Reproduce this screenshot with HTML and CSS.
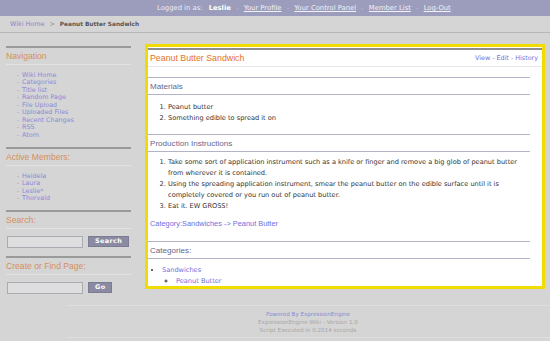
FILE: index.html
```html
<!doctype html>
<html lang="en">
<head>
	<meta charset="UTF-8">
	<title>Peanut Butter Sandwich</title>
	<link rel="stylesheet" href="styles.css">
</head>
<body>
	<div class="topbar">
		Logged in as: <b>Leslie</b> <span class="sep">-</span>
		<a href="#">Your Profile</a> <span class="sep">-</span>
		<a href="#">Your Control Panel</a> <span class="sep">-</span>
		<a href="#">Member List</a> <span class="sep">-</span>
		<a href="#">Log-Out</a>
	</div>
	<div class="crumbs"><a href="#">Wiki Home</a> <span class="gt">&gt;</span> <b>Peanut Butter Sandwich</b></div>

	<div class="wrap">
		<div class="side">
			<div class="box">
				<h3>Navigation</h3>
				<ul class="links">
					<li><a href="#">Wiki Home</a></li>
					<li><a href="#">Categories</a></li>
					<li><a href="#">Title list</a></li>
					<li><a href="#">Random Page</a></li>
					<li><a href="#">File Upload</a></li>
					<li><a href="#">Uploaded Files</a></li>
					<li><a href="#">Recent Changes</a></li>
					<li><a href="#">RSS</a></li>
					<li><a href="#">Atom</a></li>
				</ul>
			</div>
			<div class="box">
				<h3>Active Members:</h3>
				<ul class="links members">
					<li><a href="#">Heidela</a></li>
					<li><a href="#">Laura</a></li>
					<li><a href="#">Leslie*</a></li>
					<li><a href="#">Thorvald</a></li>
				</ul>
			</div>
			<div class="box">
				<h3>Search:</h3>
				<form class="field">
					<input type="text" class="input">
					<button type="button" class="btn">Search</button>
				</form>
			</div>
			<div class="box last">
				<h3>Create or Find Page:</h3>
				<form class="field">
					<input type="text" class="input">
					<button type="button" class="btn">Go</button>
				</form>
			</div>
		</div>

		<div class="main">
			<div class="title">
				<h1>Peanut Butter Sandwich</h1>
				<div class="tabs"><a href="#">View</a> - <a href="#">Edit</a> - <a href="#">History</a></div>
			</div>

			<h2>Materials</h2>
			<ol>
				<li>Peanut butter</li>
				<li>Something edible to spread it on</li>
			</ol>

			<h2>Production Instructions</h2>
			<ol class="steps">
				<li>Take some sort of application instrument such as a knife or finger and remove a big glob of peanut butter from wherever it is contained.</li>
				<li>Using the spreading application instrument, smear the peanut butter on the edible surface until it is completely covered or you run out of peanut butter.</li>
				<li>Eat it. EW GROSS!</li>
			</ol>
			<p class="catlink"><a href="#">Category:Sandwiches -&gt; Peanut Butter</a></p>

			<h2>Categories:</h2>
			<ul class="cats">
				<li><a href="#">Sandwiches</a>
					<ul>
						<li><a href="#">Peanut Butter</a></li>
					</ul>
				</li>
			</ul>
		</div>
	</div>

	<div class="footer">
		<a href="#">Powered By ExpressionEngine</a><br>
		ExpressionEngine Wiki - Version 1.0<br>
		Script Executed in 0.2014 seconds
	</div>
</body>
</html>
```

FILE: styles.css
```css
body{
	margin:0;
	background:#d5d5d5;
	font-family:"DejaVu Sans",Verdana,sans-serif;
	font-size:6.6px;
	color:#333;
}
a{
	color:#7b7bd6;
	text-decoration:none;
}
ul,ol,h1,h2,h3,p,form{
	margin:0;
	padding:0;
}

/* top bar */
.topbar{
	height:16px;
	line-height:16px;
	background:#9c9dbc;
	color:#eeeef4;
	padding-left:157px;
	white-space:nowrap;
	font-size:6.8px;
}
.topbar a{
	color:#f2f2f7;
	text-decoration:underline;
}
.topbar b{
	color:#fff;
	margin:0 0 0 4px;
}
.topbar .sep{
	color:#c4c5d8;
	margin:0 3px;
}

.crumbs{
	height:16px;
	line-height:17px;
	padding-left:10px;
	border-bottom:1px solid #b7b7b7;
	color:#666;
	font-size:6.4px;
}
.crumbs a{
	color:#8585c8;
}
.crumbs .gt{
	margin:0 3px;
	color:#888;
}
.crumbs b{
	color:#555;
	font-size:5.8px;
}

.wrap{
	display:flex;
	align-items:flex-start;
	margin-top:11px;
}

/* sidebar */
.side{
	width:125px;
	margin-left:6px;
	padding-top:2px;
	font-size:6.4px;
}
.box{
	border-top:2px solid #9a9a9a;
	padding-bottom:8px;
}
.box h3{
	height:16px;
	line-height:17px;
	border-bottom:1px solid #e2e2e2;
	font-family:"Liberation Sans",Arial,sans-serif;
	font-weight:normal;
	font-size:8.6px;
	color:#d68f5e;
}
.links{
	margin:7px 0 0 5px;
	list-style-type:"-";
	padding-left:8px;
	line-height:7.45px;
}
.links li::marker{
	color:#a5a5a5;
}
.links a{
	color:#8a8ad8;
	padding-left:3px;
}
.members{
	line-height:7.3px;
}
.field{
	display:flex;
	align-items:flex-start;
	gap:5px;
	margin:7px 0 0 1px;
}
.input{
	width:76px;
	height:12px;
	box-sizing:border-box;
	border:1px solid #ababb4;
	background:#dedede;
	padding:0;
}
.btn{
	height:11px;
	padding:0 6px;
	border:1px solid #7b7b93;
	background:#8a8ba3;
	color:#fff;
	font-family:"DejaVu Sans",Verdana,sans-serif;
	font-weight:bold;
	font-size:6.4px;
	letter-spacing:0.4px;
	line-height:9px;
}
.box.last{
	padding-bottom:0;
}

/* main content */
.main{
	width:394px;
	margin-left:14px;
	border:3px solid #f1dc00;
	background:#fff;
	padding-top:1px;
}
.title{
	display:flex;
	justify-content:space-between;
	align-items:center;
	height:16px;
	border-top:2px solid #8e8e8e;
	border-bottom:1px solid #e6e6e6;
	padding:0 4px 0 2px;
}
.title h1{
	font-family:"Liberation Sans",Arial,sans-serif;
	font-weight:normal;
	font-size:8.8px;
	color:#e5711f;
}
.tabs{
	color:#8c8cc8;
	font-size:6.4px;
}
.tabs a{
	color:#6f6fe0;
}
.main h2{
	height:16px;
	line-height:17px;
	margin:10px 12px 0 0;
	padding-left:2px;
	border-top:1px solid #b3b3c6;
	border-bottom:1px solid #b3b3c6;
	font-family:"Liberation Sans",Arial,sans-serif;
	font-weight:normal;
	font-size:8.1px;
	color:#67678a;
}
.main ol{
	margin:7px 16px 9px 14px;
	padding-left:6px;
	line-height:11px;
}
.main ol.steps{
	margin-top:5px;
	margin-bottom:6px;
}
.catlink{
	margin:6px 0 12px 2px;
	line-height:11px;
	font-family:"Liberation Sans",Arial,sans-serif;
	font-size:7.4px;
}
.catlink a{
	color:#6e6ee0;
}
.cats{
	margin-top:6px;
	padding-left:14px;
	line-height:10.5px;
}
.cats ul{
	padding-left:14px;
	list-style-type:circle;
}
.cats a{
	color:#7070dd;
}

/* footer */
.footer{
	margin-top:11px;
	margin-left:66px;
	padding:4px 0 3px;
	border-top:1px solid #dedede;
	border-bottom:1px solid #dedede;
	text-align:center;
	line-height:8px;
	font-size:5.6px;
	color:#a7a7a7;
}
.footer a{
	color:#8a8ad0;
}
```
